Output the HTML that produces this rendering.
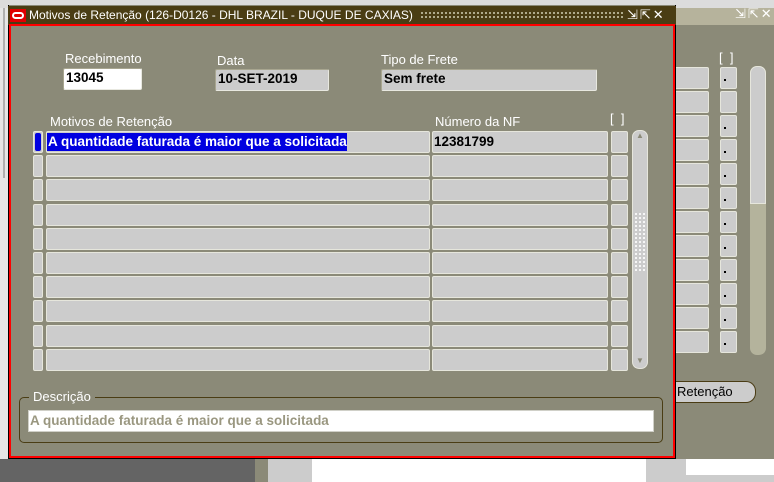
<!DOCTYPE html>
<html><head><meta charset="utf-8"><style>
*{margin:0;padding:0;box-sizing:border-box}
body{width:774px;height:482px;overflow:hidden;position:relative;background:#e6e6e6;font-family:"Liberation Sans",sans-serif;font-size:13px}
.a{position:absolute}
.lbl{position:absolute;color:#fff;font-size:13px;white-space:nowrap}
.fld{position:absolute;background:#cccccc;border:1px solid #a8a690;border-right-color:#e8e8e0;border-bottom-color:#e8e8e0;border-radius:2px;font-weight:bold;font-size:13.5px;padding-left:2px;line-height:18px;color:#000}
.rf{position:absolute;background:#cccccc;border:1px solid #e6e6dc;border-radius:2px}
</style></head><body>
<div class="a" style="left:0;top:0;width:774px;height:8px;background:#dcdcdc"></div>
<div class="a" style="left:3px;top:8px;width:2px;height:170px;background:#b0b0b0"></div>
<div class="a" style="left:676px;top:8px;width:98px;height:17px;background:#b6b39c"></div>
<div class="a" style="left:735px;top:6px;font-size:13px;color:#fff;letter-spacing:2px">⇲⇱✕</div>
<div class="a" style="left:676px;top:25px;width:98px;height:434px;background:#8b8a78"></div>
<div class="lbl" style="left:719px;top:50px">[&nbsp;&nbsp;]</div>
<div id="bg"></div>
<div class="a" style="left:750px;top:66px;width:16px;height:289px;background:#b4b39c;border-radius:7px"></div>
<div class="a" style="left:750px;top:66px;width:16px;height:138px;background:#cccccc;border:1px solid #e6e6dc;border-radius:7px 7px 0 0"></div>
<div class="a" style="left:676px;top:381px;width:80px;height:22px;background:#cccccc;border:1px solid #4a3c14;border-left:none;border-radius:0 10px 10px 0;padding-left:1px;line-height:20px">Retenção</div>
<div class="a" style="left:0;top:459px;width:255px;height:23px;background:#646464"></div>
<div class="a" style="left:255px;top:459px;width:13px;height:23px;background:#8b8a78"></div>
<div class="a" style="left:268px;top:459px;width:44px;height:23px;background:#cccccc"></div>
<div class="a" style="left:312px;top:459px;width:334px;height:23px;background:#fff"></div>
<div class="a" style="left:646px;top:459px;width:40px;height:23px;background:#cccccc"></div>
<div class="a" style="left:686px;top:459px;width:88px;height:23px;background:#fff"></div>
<div class="a" style="left:686px;top:475px;width:88px;height:7px;background:#cccccc"></div>
<div class="a" style="left:8px;top:5px;width:668px;height:454px;background:#8b8a78;border:1px solid #000;border-top:none"></div>
<div class="a" style="left:8px;top:6px;width:668px;height:19px;background:#4a3d14"></div>
<div class="a" style="left:10px;top:9px;width:16px;height:13px;background:#e00000"></div>
<div class="a" style="left:12px;top:12px;width:12px;height:7px;border:2px solid #fff;border-radius:4px"></div>
<div class="a" style="left:29px;top:8px;color:#fff;font-size:12px;white-space:nowrap">Motivos de Retenção (126-D0126 - DHL BRAZIL - DUQUE DE CAXIAS)</div>
<div class="a" style="left:420px;top:11px;width:205px;height:9px;background-image:radial-gradient(#c8c4a8 30%,transparent 40%);background-size:4px 4px"></div>
<div class="a" style="left:627px;top:7px;font-size:13px;color:#fff;letter-spacing:2px">⇲⇱✕</div>
<div class="a" style="left:9px;top:24px;width:666px;height:434px;border:2px solid #f00"></div>

<div class="lbl" style="left:65px;top:51px">Recebimento</div>
<div class="fld" style="left:63px;top:68px;width:79px;height:22px;background:#fff">13045</div>
<div class="lbl" style="left:217px;top:53px">Data</div>
<div class="fld" style="left:215px;top:69px;width:114px;height:22px">10-SET-2019</div>
<div class="lbl" style="left:381px;top:52px">Tipo de Frete</div>
<div class="fld" style="left:381px;top:69px;width:216px;height:22px">Sem frete</div>

<div class="lbl" style="left:50px;top:114px">Motivos de Retenção</div>
<div class="lbl" style="left:435px;top:114px">Número da NF</div>
<div class="lbl" style="left:610px;top:111px">[&nbsp;&nbsp;]</div>
<div id="rows"></div>
<div class="a" style="left:632px;top:130px;width:16px;height:239px;background:#cccccc;border:1px solid #e6e6dc;border-radius:7px"></div>
<div class="a" style="left:636px;top:131px;font-size:8px;color:#8b8a78">▲</div>
<div class="a" style="left:636px;top:356px;font-size:8px;color:#8b8a78">▼</div>
<div class="a" style="left:634px;top:212px;width:12px;height:60px;background-image:radial-gradient(#fff 30%,transparent 40%);background-size:4px 4px"></div>

<div class="a" style="left:19px;top:397px;width:644px;height:46px;border:1px solid #4a3d14;border-radius:5px"></div>
<div class="lbl" style="left:29px;top:389px;background:#8b8a78;padding:0 4px">Descrição</div>
<div class="a" style="left:28px;top:410px;width:626px;height:22px;background:#fff;border:1px solid #d0d0c8;color:#9a9780;font-weight:bold;font-size:13.5px;line-height:20px;padding-left:1px">A quantidade faturada é maior que a solicitada</div>
<script>
var h='';
for(var i=0;i<10;i++){var y=Math.round(131+i*24.2);
h+='<div class="rf" style="left:33px;top:'+y+'px;width:10px;height:22px"></div>';
if(i==0)h+='<div class="a" style="left:35px;top:'+(y+2)+'px;width:6px;height:18px;background:#0000e0;border-radius:2px"></div>';
h+='<div class="rf" style="left:46px;top:'+y+'px;width:384px;height:22px"></div>';
h+='<div class="rf" style="left:432px;top:'+y+'px;width:176px;height:22px"></div>';
h+='<div class="rf" style="left:611px;top:'+y+'px;width:17px;height:22px"></div>';}
document.getElementById('rows').innerHTML=h+'<div class="a" style="left:47px;top:133px;background:#0000e0;color:#fff;font-weight:bold;font-size:13.5px;line-height:18px;padding-left:1px;white-space:nowrap">A quantidade faturada é maior que a solicitada</div><div class="a" style="left:434px;top:133px;font-weight:bold;font-size:13.5px;line-height:18px">12381799</div>';
var g='';
for(var j=0;j<12;j++){var y2=Math.round(67+j*24);
g+='<div class="rf" style="left:670px;top:'+y2+'px;width:39px;height:22px"></div>';
g+='<div class="rf" style="left:720px;top:'+y2+'px;width:17px;height:22px"></div>';
if(j!=1)g+='<div class="a" style="left:724px;top:'+(y2+12)+'px;width:2px;height:2px;background:#000"></div>';}
document.getElementById('bg').innerHTML=g;
</script>
</body></html>
